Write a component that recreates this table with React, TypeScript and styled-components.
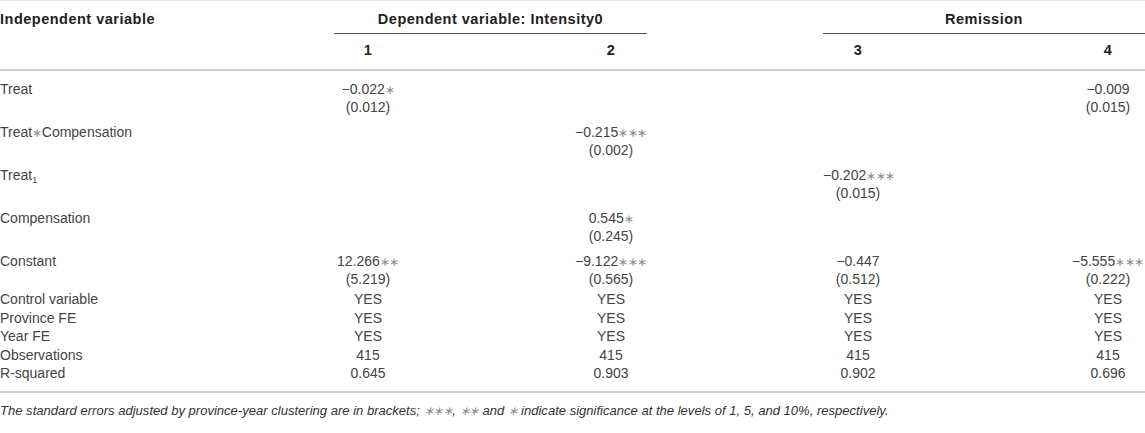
import React from "react";
import styled, { createGlobalStyle } from "styled-components";

// label | col1 | spacer | col2 | spacer | col3 | spacer | col4
const columns = "334px 68px 173px 72px 176px 70px 178px 74px";
const valueColumns = [2, 4, 6, 8];

const GlobalStyle = createGlobalStyle`
  html, body {
    margin: 0;
    padding: 0;
    background: #ffffff;
  }
  body {
    font-family: "Liberation Sans", Arial, Helvetica, sans-serif;
    color: #444444;
  }
`;

const TableWrap = styled.div`
  width: 1145px;
  overflow: hidden;
  border-top: 1px solid #e4e4e4;
`;

const HeadGrid = styled.div`
  display: grid;
  grid-template-columns: ${columns};
  border-bottom: 2px solid #cfcfcf;
  font-weight: 700;
  font-size: 14.5px;
  letter-spacing: 0.5px;
  line-height: 18px;
  color: #222222;
`;

const HeadLabel = styled.div`
  grid-column: 1;
  grid-row: 1;
  padding: 9px 0 5px 0;
  white-space: nowrap;
`;

const GroupTitle = styled.div<{ $from: number; $to: number }>`
  grid-column: ${(p) => p.$from} / ${(p) => p.$to};
  grid-row: 1;
  padding: 9px 0 5px 0;
  text-align: center;
  white-space: nowrap;
  border-bottom: 1px solid #555555;
`;

const ColNumber = styled.div<{ $col: number }>`
  grid-column: ${(p) => p.$col};
  grid-row: 2;
  padding: 7px 0 10px 0;
  text-align: center;
`;

const Body = styled.div`
  padding: 8.7px 0 8.5px 0;
  border-bottom: 2px solid #cfcfcf;
`;

const Row = styled.div<{ $pad?: number }>`
  display: grid;
  grid-template-columns: ${columns};
  font-size: 14px;
  line-height: 18.6px;
  padding-bottom: ${(p) => p.$pad ?? 0}px;
`;

const Label = styled.div`
  grid-column: 1;
  height: 18.6px;
  white-space: nowrap;
`;

const Cell = styled.div<{ $col: number }>`
  grid-column: ${(p) => p.$col};
  text-align: center;
  white-space: nowrap;
`;

const Line = styled.div`
  height: 18.6px;
`;

const Star = styled.span`
  color: #8c8c8c;
  font-size: 12px;
  letter-spacing: -0.4px;
  line-height: 0;
`;

const Sub = styled.sub`
  font-size: 9px;
  line-height: 0;
  vertical-align: -3px;
`;

const Note = styled.p`
  margin: 0;
  padding: 9px 0 0 0;
  font-size: 13.05px;
  line-height: 18px;
  font-style: italic;
  color: #333333;
  white-space: nowrap;
`;

type Coef = { v: string; stars?: number; se?: string } | null;

type RowData = {
  label: React.ReactNode;
  values: Coef[];
  pad?: number;
};

const stars = (n: number): string => "∗".repeat(n);

const same = (v: string): Coef[] => [{ v }, { v }, { v }, { v }];

const rows: RowData[] = [
  {
    label: "Treat",
    values: [{ v: "−0.022", stars: 1, se: "(0.012)" }, null, null, { v: "−0.009", se: "(0.015)" }],
    pad: 5.8,
  },
  {
    label: (
      <>
        Treat<Star>∗</Star>Compensation
      </>
    ),
    values: [null, { v: "−0.215", stars: 3, se: "(0.002)" }, null, null],
    pad: 5.8,
  },
  {
    label: (
      <>
        Treat<Sub>1</Sub>
      </>
    ),
    values: [null, null, { v: "−0.202", stars: 3, se: "(0.015)" }, null],
    pad: 5.8,
  },
  {
    label: "Compensation",
    values: [null, { v: "0.545", stars: 1, se: "(0.245)" }, null, null],
    pad: 5.8,
  },
  {
    label: "Constant",
    values: [
      { v: "12.266", stars: 2, se: "(5.219)" },
      { v: "−9.122", stars: 3, se: "(0.565)" },
      { v: "−0.447", se: "(0.512)" },
      { v: "−5.555", stars: 3, se: "(0.222)" },
    ],
    pad: 1.2,
  },
  { label: "Control variable", values: same("YES") },
  { label: "Province FE", values: same("YES") },
  { label: "Year FE", values: same("YES") },
  { label: "Observations", values: same("415") },
  {
    label: "R-squared",
    values: [{ v: "0.645" }, { v: "0.903" }, { v: "0.902" }, { v: "0.696" }],
  },
];

const App = (): JSX.Element => {
  return (
    <React.Fragment>
      <GlobalStyle />
      <TableWrap>
        <HeadGrid>
          <HeadLabel>Independent variable</HeadLabel>
          <GroupTitle $from={2} $to={5}>
            Dependent variable: Intensity0
          </GroupTitle>
          <GroupTitle $from={6} $to={9}>
            Remission
          </GroupTitle>
          {valueColumns.map((col, i) => (
            <ColNumber key={col} $col={col}>
              {i + 1}
            </ColNumber>
          ))}
        </HeadGrid>

        <Body>
          {rows.map((row, r) => (
            <Row key={r} $pad={row.pad}>
              <Label>{row.label}</Label>
              {row.values.map((c, i) =>
                c ? (
                  <Cell key={i} $col={valueColumns[i]}>
                    <Line>
                      {c.v}
                      {c.stars ? <Star>{stars(c.stars)}</Star> : null}
                    </Line>
                    {c.se && <Line>{c.se}</Line>}
                  </Cell>
                ) : null
              )}
            </Row>
          ))}
        </Body>

        <Note>
          The standard errors adjusted by province-year clustering are in brackets; <Star>∗∗∗</Star>,{" "}
          <Star>∗∗</Star> and <Star>∗</Star> indicate significance at the levels of 1, 5, and 10%,
          respectively.
        </Note>
      </TableWrap>
    </React.Fragment>
  );
};

export default App;
